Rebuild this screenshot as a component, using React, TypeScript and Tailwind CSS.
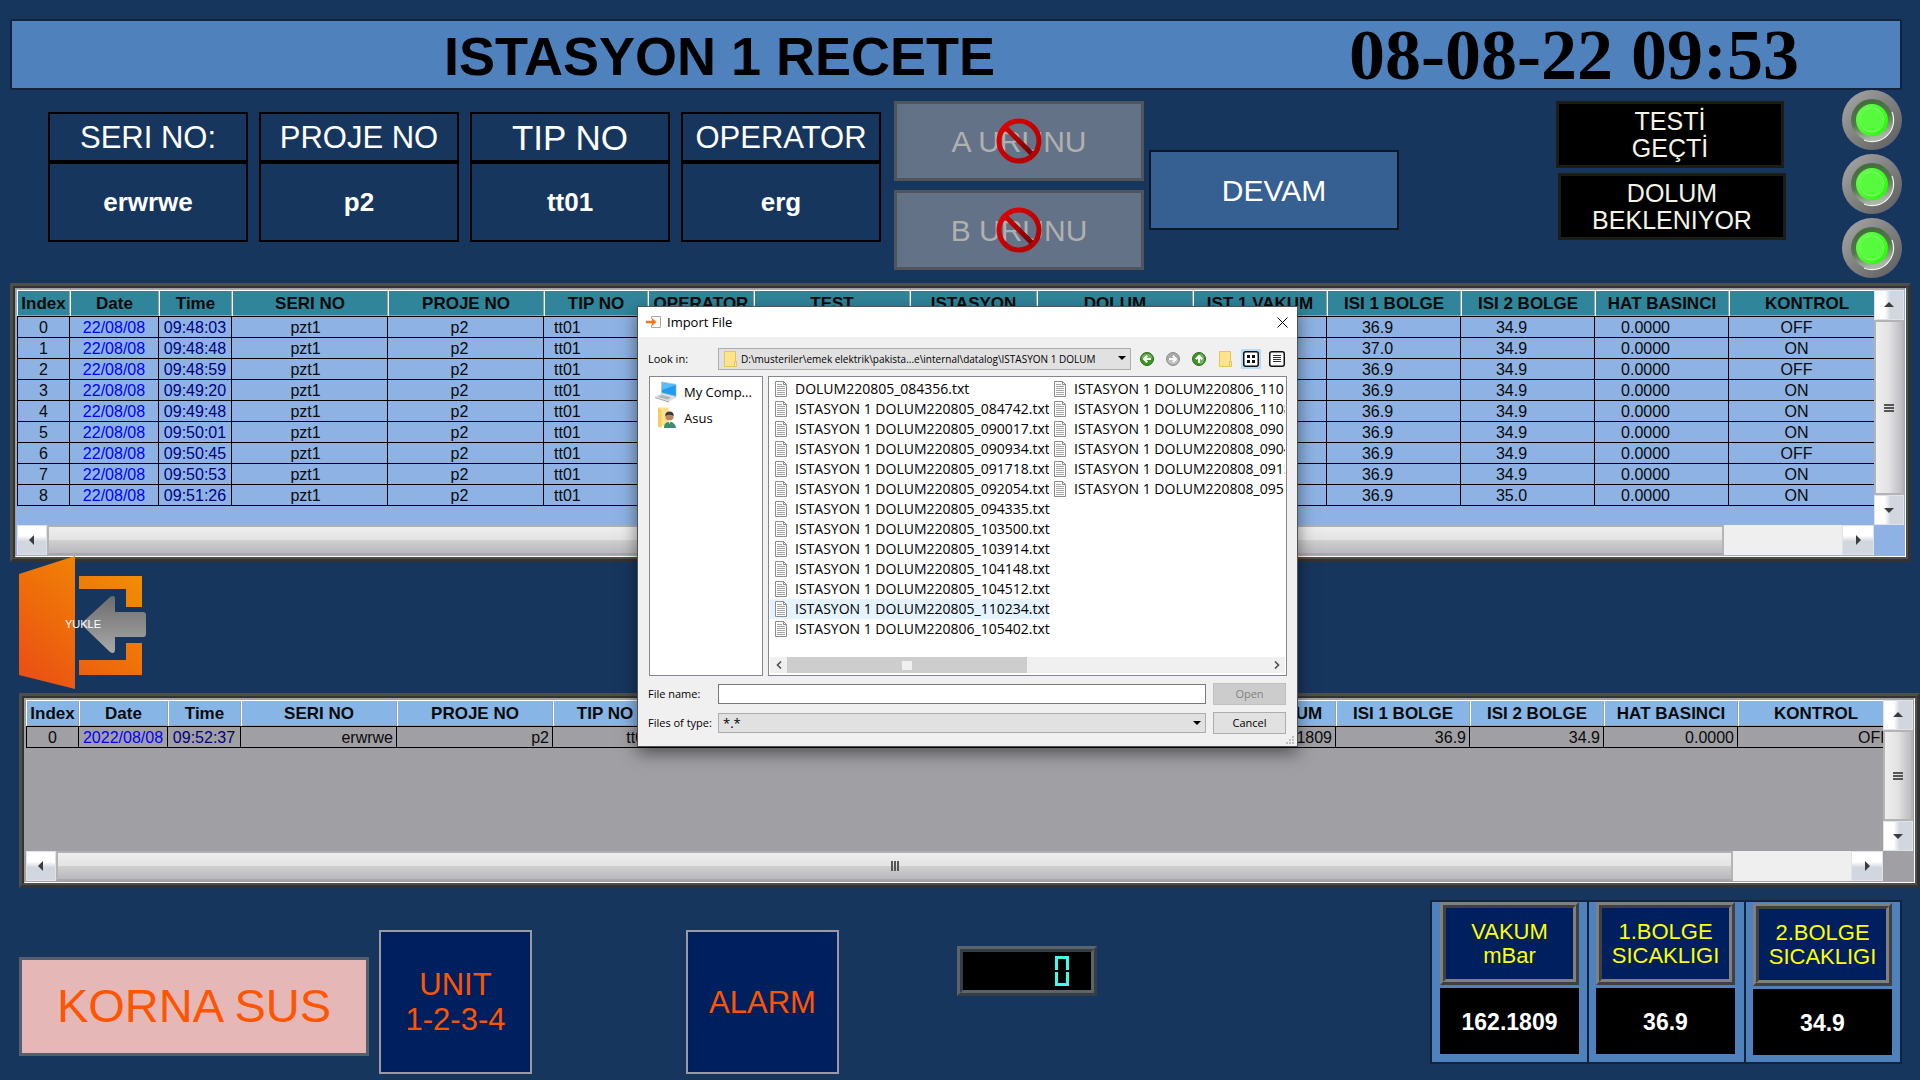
import React from "react";

/* ---------- data ---------- */

type Column = { title: string; width: string; cell: string };

const logColumns: Column[] = [
  { title: "Index", width: "w-[53px]", cell: "text-center" },
  { title: "Date", width: "w-[89px]", cell: "text-center text-[#0000ff]" },
  { title: "Time", width: "w-[73px]", cell: "text-center text-[#000080]" },
  { title: "SERI NO", width: "w-[156px]", cell: "text-center pr-2" },
  { title: "PROJE NO", width: "w-[156px]", cell: "text-center pr-3" },
  { title: "TIP NO", width: "w-[104px]", cell: "pl-2.5" },
  { title: "OPERATOR", width: "w-[106px]", cell: "text-center" },
  { title: "TEST", width: "w-[156px]", cell: "text-center" },
  { title: "ISTASYON", width: "w-[127px]", cell: "text-center" },
  { title: "DOLUM", width: "w-[156px]", cell: "text-center" },
  { title: "IST 1 VAKUM", width: "w-[134px]", cell: "text-center" },
  { title: "ISI 1 BOLGE", width: "w-[134px]", cell: "text-center pr-8" },
  { title: "ISI 2 BOLGE", width: "w-[134px]", cell: "text-center pr-8" },
  { title: "HAT BASINCI", width: "w-[134px]", cell: "text-center pr-8" },
  { title: "KONTROL", width: "w-auto", cell: "text-center pr-5" },
];

const liveColumns: Column[] = logColumns.map((c, i) => ({
  ...c,
  cell: i < 3 ? c.cell : "text-right pr-[3px]",
}));

const logRow = (i: number, time: string, isi1: string, isi2: string, kontrol: string) => [
  String(i), "22/08/08", time, "pzt1", "p2", "tt01", "", "", "", "", "", isi1, isi2, "0.0000", kontrol,
];

const logRows = [
  logRow(0, "09:48:03", "36.9", "34.9", "OFF"),
  logRow(1, "09:48:48", "37.0", "34.9", "ON"),
  logRow(2, "09:48:59", "36.9", "34.9", "OFF"),
  logRow(3, "09:49:20", "36.9", "34.9", "ON"),
  logRow(4, "09:49:48", "36.9", "34.9", "ON"),
  logRow(5, "09:50:01", "36.9", "34.9", "ON"),
  logRow(6, "09:50:45", "36.9", "34.9", "OFF"),
  logRow(7, "09:50:53", "36.9", "34.9", "ON"),
  logRow(8, "09:51:26", "36.9", "35.0", "ON"),
];

const liveRows = [
  ["0", "2022/08/08", "09:52:37", "erwrwe", "p2", "tt01", "erg", "", "", "", "162.1809", "36.9", "34.9", "0.0000", "OFF"],
];

const files = [
  "DOLUM220805_084356.txt",
  "ISTASYON 1 DOLUM220805_084742.txt",
  "ISTASYON 1 DOLUM220805_090017.txt",
  "ISTASYON 1 DOLUM220805_090934.txt",
  "ISTASYON 1 DOLUM220805_091718.txt",
  "ISTASYON 1 DOLUM220805_092054.txt",
  "ISTASYON 1 DOLUM220805_094335.txt",
  "ISTASYON 1 DOLUM220805_103500.txt",
  "ISTASYON 1 DOLUM220805_103914.txt",
  "ISTASYON 1 DOLUM220805_104148.txt",
  "ISTASYON 1 DOLUM220805_104512.txt",
  "ISTASYON 1 DOLUM220805_110234.txt",
  "ISTASYON 1 DOLUM220806_105402.txt",
  "ISTASYON 1 DOLUM220806_1101",
  "ISTASYON 1 DOLUM220806_1108",
  "ISTASYON 1 DOLUM220808_0901",
  "ISTASYON 1 DOLUM220808_0904",
  "ISTASYON 1 DOLUM220808_0915",
  "ISTASYON 1 DOLUM220808_0951",
];
const hoveredFile = 11;

/* ---------- header widgets ---------- */

function InfoBox({ label, value, big }: { label: string; value: string; big?: boolean }) {
  return (
    <div className="w-[200px] text-center text-white">
      <div
        className={`flex h-[50px] items-center justify-center whitespace-nowrap border-2 border-black pt-0.5 ${big ? "text-[35px]" : "text-[31px]"}`}
      >
        {label}
      </div>
      <div className="flex h-20 items-center justify-center border-2 border-black text-[26px] font-bold">{value}</div>
    </div>
  );
}

function Prohibited() {
  return (
    <svg viewBox="0 0 46 46" className="absolute left-1/2 top-1/2 size-[46px] -translate-x-1/2 -translate-y-1/2">
      <defs>
        <linearGradient id="ban" x1="0" y1="0" x2="1" y2="1">
          <stop offset="0" stopColor="#e60000" />
          <stop offset="0.5" stopColor="#c40000" />
          <stop offset="1" stopColor="#b00000" />
        </linearGradient>
        <linearGradient id="banBar" gradientUnits="userSpaceOnUse" x1="9" y1="9" x2="37" y2="37">
          <stop offset="0" stopColor="#d80000" />
          <stop offset="1" stopColor="#700000" />
        </linearGradient>
      </defs>
      <path d="M10 10L36 36" stroke="url(#banBar)" strokeWidth="5" />
      <circle cx="23" cy="23" r="20" fill="none" stroke="url(#ban)" strokeWidth="5" />
    </svg>
  );
}

function LockedButton({ children }: { children: React.ReactNode }) {
  return (
    <button
      type="button"
      disabled
      className="relative h-20 w-[250px] border-[3px] border-[#50555c] bg-[#637287] text-[30px] text-[#b0b0b0]"
    >
      {children}
      <Prohibited />
    </button>
  );
}

function Led() {
  return (
    <svg viewBox="0 0 60 60" className="size-[60px]" role="img" aria-label="on">
      <defs>
        <linearGradient id="bezel" x1="0" y1="0" x2="1" y2="1">
          <stop offset="0" stopColor="#aaaaaa" />
          <stop offset="0.5" stopColor="#808080" />
          <stop offset="1" stopColor="#5c5c5c" />
        </linearGradient>
        <linearGradient id="cavity" x1="0" y1="0" x2="0.3" y2="1">
          <stop offset="0" stopColor="#3f6a38" />
          <stop offset="0.6" stopColor="#55774f" />
          <stop offset="1" stopColor="#a9b8a6" />
        </linearGradient>
        <linearGradient id="lamp" x1="0" y1="0" x2="1" y2="0.8">
          <stop offset="0" stopColor="#6dff55" />
          <stop offset="0.6" stopColor="#46fb2a" />
          <stop offset="1" stopColor="#22ff00" />
        </linearGradient>
      </defs>
      <circle cx="30" cy="30" r="30" fill="url(#bezel)" />
      <circle cx="30" cy="30" r="21" fill="url(#cavity)" />
      <path d="M50 22A21.5 21.5 0 0 1 22 50" fill="none" stroke="#f2f7f0" strokeWidth="1.2" />
      <circle cx="30" cy="30" r="16" fill="url(#lamp)" />
      <circle cx="30" cy="30" r="12" fill="#55fb3c" stroke="#7dff68" strokeWidth="1" />
    </svg>
  );
}

function StatusBox({ lines }: { lines: string[] }) {
  return (
    <div className="flex h-[67px] w-[228px] flex-col items-center justify-center border-[3px] border-[#1d1d14] bg-black text-[25px] leading-[27px] text-[#f4f4e6]">
      {lines.map((l) => (
        <span key={l}>{l}</span>
      ))}
    </div>
  );
}

/* ---------- table panels ---------- */

function Arrow({ dir }: { dir: "left" | "right" | "up" | "down" }) {
  const d = {
    left: "M9 2V12L4 7Z",
    right: "M5 2V12L10 7Z",
    up: "M2 9H12L7 4Z",
    down: "M2 5H12L7 10Z",
  }[dir];
  return (
    <svg viewBox="0 0 14 14" className="size-3.5">
      <path d={d} fill="#3c3c3c" />
    </svg>
  );
}

function VScroll() {
  const btn =
    "flex h-[30px] w-full items-center justify-center border border-[#dfe3e8] bg-linear-to-r from-white from-35% to-[#d2d7df] to-55%";
  return (
    <div className="flex w-[30px] flex-col bg-[#eeeeee]">
      <button type="button" aria-label="Scroll up" className={btn}>
        <Arrow dir="up" />
      </button>
      <div className="flex flex-1 flex-col items-center justify-center gap-px border-2 border-[#b4b4b6] bg-linear-to-r from-[#eeeeee] via-[#e2e2e2] via-50% to-[#bcbcc0]">
        <i className="h-0.5 w-2.5 bg-[#555]" />
        <i className="h-0.5 w-2.5 bg-[#555]" />
        <i className="h-0.5 w-2.5 bg-[#555]" />
      </div>
      <button type="button" aria-label="Scroll down" className={btn}>
        <Arrow dir="down" />
      </button>
    </div>
  );
}

function HScroll() {
  const btn =
    "flex h-full items-center justify-center border border-[#dfe3e8] bg-linear-to-b from-white from-35% to-[#d2d7df] to-55%";
  return (
    <div className="flex h-[30px] min-w-0 flex-1 bg-[#efefef]">
      <button type="button" aria-label="Scroll left" className={`${btn} w-[30px]`}>
        <Arrow dir="left" />
      </button>
      <div className="flex flex-1 flex-col border-2 border-b-[#a8a8aa] border-l-[#b4b4b6] border-r-[#b4b4b6] border-t-[#b0b0b2]">
        <div className="relative flex-1 bg-linear-to-b from-[#eeeeee] to-[#e3e3e3]">
          <span className="absolute left-1/2 top-2 flex -translate-x-1/2 gap-px">
            <i className="h-2.5 w-0.5 bg-[#555]" />
            <i className="h-2.5 w-0.5 bg-[#555]" />
            <i className="h-2.5 w-0.5 bg-[#555]" />
          </span>
        </div>
        <div className="flex-1 bg-linear-to-b from-[#d0d0d0] to-[#b9b9be]" />
      </div>
      <div className="w-[118px]" />
      <button type="button" aria-label="Scroll right" className={`${btn} w-8`}>
        <Arrow dir="right" />
      </button>
    </div>
  );
}

type GridProps = {
  columns: Column[];
  rows: string[][];
  bg: string;
  head: string;
  area: string;
};

function DataPanel({ columns, rows, bg, head, area }: GridProps) {
  return (
    <div className="border-[3px] border-b-[#333333] border-l-[#4e4e4c] border-r-[#333333] border-t-[#4e4e4c]">
      <div className="border-2 border-b-[#4e4e4c] border-l-[#333333] border-r-[#4e4e4c] border-t-[#333333]">
        <div className={`border border-b-white border-l-[#a0a0a0] border-r-white border-t-[#a0a0a0] p-px ${bg}`}>
          <div className="flex">
            <div className={`min-w-0 flex-1 overflow-hidden ${area}`}>
              <table className="w-[calc(100%+11px)] table-fixed border-separate border-spacing-0 text-[16px] leading-[18px] text-[#0a0a0a]">
                <colgroup>
                  {columns.map((c) => (
                    <col key={c.title} className={c.width} />
                  ))}
                </colgroup>
                <thead>
                  <tr>
                    {columns.map((c) => (
                      <th
                        key={c.title}
                        className={`h-[27px] whitespace-nowrap border-b border-black px-0 pb-0 pt-0.5 text-center text-[17px] font-bold shadow-[inset_1px_1px_0_#ffffff,inset_-1px_-1px_0_#a0a0a0] ${head}`}
                      >
                        {c.title}
                      </th>
                    ))}
                  </tr>
                </thead>
                <tbody>
                  {rows.map((r) => (
                    <tr key={r[0]}>
                      {r.map((v, i) => (
                        <td
                          key={i}
                          className={`h-[21px] whitespace-nowrap border-b border-r border-black pb-0 pt-0.5 first:border-l ${columns[i].cell}`}
                        >
                          {v}
                        </td>
                      ))}
                    </tr>
                  ))}
                </tbody>
              </table>
            </div>
            <VScroll />
          </div>
          <div className="flex">
            <HScroll />
            <div className="w-[30px]" />
          </div>
        </div>
      </div>
    </div>
  );
}

function LoadButton() {
  return (
    <button type="button" className="relative -mt-1.5 block h-[134px] w-[127px]">
      <svg viewBox="0 0 127 134" className="size-full">
        <defs>
          <linearGradient id="door" gradientUnits="userSpaceOnUse" x1="10" y1="125" x2="110" y2="15">
            <stop offset="0" stopColor="#ea5014" />
            <stop offset="0.45" stopColor="#ee6c0a" />
            <stop offset="1" stopColor="#f18c04" />
          </linearGradient>
          <linearGradient id="arrow" x1="0" y1="0" x2="0" y2="1">
            <stop offset="0" stopColor="#6c6c6c" />
            <stop offset="1" stopColor="#a9a9a9" />
          </linearGradient>
        </defs>
        <g fill="url(#door)">
          <path d="M0 18L56 0V133L0 119Z" />
          <path d="M60 20H123V51H107V33H60Z" />
          <path d="M60 119H123V87H107V104H60Z" />
        </g>
        <path
          fill="url(#arrow)"
          d="M65 65L91 41Q96 38 96 43V56H124Q127 56 127 59V78Q127 81 124 81H96V93Q96 99 91 96L65 71Q62 68 65 65Z"
        />
      </svg>
      <span className="absolute left-[46px] top-[60px] text-[11px] leading-4 text-white">YUKLE</span>
    </button>
  );
}

/* ---------- import dialog ---------- */

function FileIcon() {
  return (
    <svg viewBox="0 0 12 16" className="h-4 w-3 shrink-0">
      <path d="M.5.5H8.5L11.5 3.5V15.5H.5Z" fill="#fcfcfc" stroke="#8b8b8b" />
      <path d="M8.5.5V3.5H11.5" fill="none" stroke="#8b8b8b" />
      <path d="M2 3.5H7M2 5.5H10M2 7.5H10M2 9.5H10M2 11.5H10M2 13.5H10" stroke="#a6a6a6" />
    </svg>
  );
}

function FolderIcon() {
  return (
    <svg viewBox="0 0 13 16" className="h-4 w-[13px]">
      <path d="M.5.5H11.5V10.5H12.5V15.5H.5Z" fill="#ffe48c" stroke="#e8c558" />
      <path d="M10.5 10.5H12.5V15.5H10.5Z" fill="#ffe9a4" stroke="#e8c558" />
    </svg>
  );
}

function NavIcon({ turn, tone }: { turn: string; tone: "green" | "gray" }) {
  const green = tone === "green";
  return (
    <svg viewBox="0 0 14 14" className={`size-3.5 ${turn}`}>
      <circle cx="7" cy="7" r="6.5" fill={green ? "#3f9427" : "#a9a9a9"} stroke={green ? "#2b6d1a" : "#8f8f8f"} />
      <path d="M1.5 6A5.6 5 0 0 1 12.5 6Q7 8 1.5 6Z" fill="#ffffff" opacity="0.28" />
      <path d="M11 7H4.5M7.2 3.8L4 7L7.2 10.2" fill="none" stroke="#ffffff" strokeWidth="2" />
    </svg>
  );
}

function ComputerIcon() {
  return (
    <svg viewBox="0 0 22 22" className="size-[22px]">
      <path d="M6 .5L21.5 3V16.5L6 12.5Z" fill="#b9c6cf" />
      <path d="M7 1.8L20.8 4V15L7 11.6Z" fill="#1e9cf0" />
      <path d="M7 1.8L20.8 4L7 9Z" fill="#58bdf8" />
      <path d="M6 12.5L21.5 16.5L14 20.5L0 16Z" fill="#d9dfe3" />
      <path d="M3 15.8L7 14L16 16.5L12.5 18.6Z" fill="#aab3b9" />
      <path d="M0 16L14 20.5V21.5L0 17Z" fill="#98a3ab" />
    </svg>
  );
}

function UserFolderIcon() {
  return (
    <svg viewBox="0 0 20 22" className="h-[22px] w-5">
      <path d="M1 .5H11.5V18L1 19.5Z" fill="#ffe089" />
      <path d="M1 .5L4.5 3V21L1 19.5Z" fill="#f5cb62" />
      <path d="M7 21Q6.5 15.5 12.5 14.5Q18.5 15.5 19 21Z" fill="#3c8f6d" />
      <circle cx="12.5" cy="9.5" r="4" fill="#b98562" />
      <path d="M8.3 9Q8 4.5 12.5 4.5Q17 4.5 16.7 9Q12.5 6.5 8.3 9Z" fill="#3b3a38" />
      <path d="M11 13.5H14L12.5 17Z" fill="#e6efe9" />
    </svg>
  );
}

function Caret() {
  return (
    <svg viewBox="0 0 8 4" className="pointer-events-none absolute right-[5px] top-2 h-1 w-2">
      <path d="M0 0H8L4 4Z" fill="#000000" />
    </svg>
  );
}

function ImportDialog() {
  const actionBtn = "h-[22px] w-[73px] border text-center";
  return (
    <section
      role="dialog"
      aria-label="Import File"
      className="absolute left-[637px] top-[306px] w-[661px] border border-[#4d5357] bg-[#f0f0f0] font-['Open_Sans',sans-serif] text-[11px] leading-4 text-black shadow-[0_6px_16px_rgba(0,0,0,0.5)]"
    >
      <header className="flex h-[30px] items-center bg-white pl-2 pr-[9px]">
        <svg viewBox="0 0 15 12" className="h-3 w-[15px]">
          <path d="M5.5 3V.5H14.5V11.5H5.5V9" fill="#fafafa" stroke="#a9a9a9" />
          <path d="M0 4.8H6V2L10.5 6L6 10V7.2H0Z" fill="#f07818" />
        </svg>
        <h2 className="ml-1.5 text-[13px]">Import File</h2>
        <button type="button" aria-label="Close" className="ml-auto">
          <svg viewBox="0 0 11 11" className="size-[11px]">
            <path d="M.5.5L10.5 10.5M10.5.5L.5 10.5" stroke="#000000" />
          </svg>
        </button>
      </header>

      <div className="flex h-[39px] items-center pl-2.5 pr-3 pt-1">
        <label htmlFor="lookin" className="w-[70px]">
          Look in:
        </label>
        <div className="relative w-[413px]">
          <select
            id="lookin"
            className="block h-[22px] w-full appearance-none border border-[#adadad] bg-[#e1e1e1] pl-[22px] pr-5 text-[10px]"
          >
            <option>D:\musteriler\emek elektrik\pakista...e\internal\datalog\ISTASYON 1 DOLUM</option>
          </select>
          <span className="pointer-events-none absolute left-1.5 top-[3px]">
            <FolderIcon />
          </span>
          <Caret />
        </div>
        <div className="ml-[9px] flex items-center gap-3">
          <button type="button" aria-label="Back">
            <NavIcon turn="rotate-0" tone="green" />
          </button>
          <button type="button" aria-label="Forward">
            <NavIcon turn="rotate-180" tone="gray" />
          </button>
          <button type="button" aria-label="Parent folder">
            <NavIcon turn="rotate-90" tone="green" />
          </button>
          <button type="button" aria-label="New folder" className="ml-px">
            <FolderIcon />
          </button>
        </div>
        <button type="button" aria-label="List view" className="ml-[9px] flex size-5 items-center justify-center bg-[#b8dcf8]">
          <svg viewBox="0 0 16 16" className="size-4">
            <rect x="0.75" y="0.75" width="14.5" height="14.5" rx="2" fill="#ffffff" stroke="#111111" strokeWidth="1.5" />
            <path d="M4 4H7V7H4ZM9 4H12V7H9ZM4 9H7V12H4ZM9 9H12V12H9Z" fill="#111111" />
          </svg>
        </button>
        <button type="button" aria-label="Detail view" className="ml-2">
          <svg viewBox="0 0 16 16" className="size-4">
            <rect x="0.75" y="0.75" width="14.5" height="14.5" rx="2" fill="#ffffff" stroke="#111111" strokeWidth="1.5" />
            <path d="M4 4.5H12M4 6.5H12M4 8.5H12M4 10.5H12" stroke="#333333" />
          </svg>
        </button>
      </div>

      <div className="flex h-[300px] gap-[5px] pl-[11px] pr-2.5">
        <ul className="w-[114px] border border-[#828790] bg-white pt-0.5 text-[13px]">
          <li className="flex h-[26px] items-center">
            <span className="flex w-[34px] pl-[5px]">
              <ComputerIcon />
            </span>
            My Comp...
          </li>
          <li className="flex h-[26px] items-center">
            <span className="flex w-[34px] pl-[7px]">
              <UserFolderIcon />
            </span>
            Asus
          </li>
        </ul>
        <div className="flex min-w-0 flex-1 flex-col justify-between overflow-hidden border border-[#828790] bg-white px-px pb-px pt-0.5 text-[14px]">
          <ul className="grid grid-flow-col auto-cols-[279px] grid-rows-[repeat(13,20px)] overflow-hidden">
            {files.map((f, i) => (
              <li key={f} className={i === hoveredFile ? "bg-[#e5f3ff]" : "bg-white"}>
                <button type="button" className="flex h-5 w-full items-center gap-2 whitespace-nowrap pl-[5px]">
                  <FileIcon />
                  {f}
                </button>
              </li>
            ))}
          </ul>
          <div className="mb-px flex h-4 items-center bg-[#f0f0f0]">
            <button type="button" aria-label="Scroll left" className="flex w-[17px] justify-center">
              <svg viewBox="0 0 6 8" className="h-2 w-1.5">
                <path d="M5 .5L1.5 4L5 7.5" fill="none" stroke="#505050" strokeWidth="1.6" />
              </svg>
            </button>
            <div className="flex h-full w-60 items-center bg-[#cdcdcd] pl-[115px]">
              <i className="h-[9px] w-2.5 bg-[#f0f0f0]" />
            </div>
            <button type="button" aria-label="Scroll right" className="ml-auto flex w-[17px] justify-center">
              <svg viewBox="0 0 6 8" className="h-2 w-1.5">
                <path d="M1 .5L4.5 4L1 7.5" fill="none" stroke="#505050" strokeWidth="1.6" />
              </svg>
            </button>
          </div>
        </div>
      </div>

      <div className="grid grid-cols-[70px_1fr_73px] items-center gap-y-[7px] pb-3 pl-2.5 pr-[11px] pt-[7px]">
        <label htmlFor="fname">File name:</label>
        <input id="fname" type="text" className="mr-[7px] h-5 border border-[#7a7a7a] bg-white px-1 outline-none" />
        <button type="button" disabled className={`${actionBtn} border-[#bfbfbf] bg-[#cccccc] text-[#838383]`}>
          Open
        </button>
        <label htmlFor="ftype" className="whitespace-nowrap">
          Files of type:
        </label>
        <div className="relative mr-[7px]">
          <select id="ftype" className="block h-5 w-full appearance-none border border-[#adadad] bg-[#e1e1e1] pl-1 text-[13px]">
            <option>*.*</option>
          </select>
          <Caret />
        </div>
        <button type="button" className={`${actionBtn} border-[#adadad] bg-[#e1e1e1]`}>
          Cancel
        </button>
      </div>
      <svg viewBox="0 0 8 8" className="absolute bottom-0.5 right-[3px] size-2">
        <path d="M6 0H8V2H6ZM3 3H5V5H3ZM6 3H8V5H6ZM0 6H2V8H0ZM3 6H5V8H3ZM6 6H8V8H6Z" fill="#bfbfbf" />
      </svg>
    </section>
  );
}

/* ---------- bottom row ---------- */

function SevenSegmentZero() {
  return (
    <span className="flex h-[30px] w-3.5 flex-col justify-between">
      <span className="sr-only">0</span>
      <i className="h-3.5 border-x-[3px] border-t-[3px] border-[#3ffbe8]" />
      <i className="h-3.5 border-x-[3px] border-b-[3px] border-[#3ffbe8]" />
    </span>
  );
}

function Sensor({ lines, value, className }: { lines: string[]; value: string; className: string }) {
  return (
    <div className={`h-[164px] w-[157px] border-y-2 border-l-2 border-[#13233b] bg-[#4f81bd] last:w-[158px] last:border-r-2 ${className}`}>
      <div className="w-[139px] border-[3px] border-b-[#404040] border-l-[#808080] border-r-[#404040] border-t-[#808080]">
        <div className="flex h-[77px] flex-col items-center justify-center border-[3px] border-b-[#808080] border-l-[#404040] border-r-[#808080] border-t-[#404040] bg-[#001f5f] text-[22px] leading-6 text-[#ffff00]">
          {lines.map((l) => (
            <span key={l}>{l}</span>
          ))}
        </div>
      </div>
      <div className="mt-[3px] flex h-[66px] w-[139px] items-center justify-center bg-black pt-0.5 text-[23px] font-bold text-white">
        {value}
      </div>
    </div>
  );
}

const navBtn =
  "h-36 w-[153px] border-2 border-[#9a9aa6] bg-[#001f5f] text-[31px] leading-[35px] text-[#ff5500]";

export default function App() {
  return (
    <main className="relative min-h-screen overflow-hidden bg-[#17365d] font-['Liberation_Sans',Arial,sans-serif]">
      <div className="pl-2.5 pr-[18px] pt-[19px]">
        <header className="flex h-[71px] items-center justify-between rounded-xs border-2 border-[#13233b] bg-[#4f81bd] pl-[432px] pr-[101px] text-black">
          <h1 className="pt-0.5 text-[54px] font-bold leading-none">ISTASYON 1 RECETE</h1>
          <time className="font-['Liberation_Serif','Times_New_Roman',serif] text-[72px] font-bold leading-[66px]">
            08-08-22 09:53
          </time>
        </header>
      </div>

      <div className="flex h-[193px] items-start pl-12 pr-[18px]">
        <div className="mt-[22px] flex gap-[11px]">
          <InfoBox label="SERI NO:" value="erwrwe" />
          <InfoBox label="PROJE NO" value="p2" />
          <InfoBox label="TIP NO" value="tt01" big />
          <InfoBox label="OPERATOR" value="erg" />
        </div>
        <div className="ml-[13px] mt-[11px] flex flex-col gap-[9px]">
          <LockedButton>A URUNU</LockedButton>
          <LockedButton>B URUNU</LockedButton>
        </div>
        <button
          type="button"
          className="ml-[5px] mt-[60px] h-20 w-[250px] border-2 border-[#0c1828] bg-[#376092] text-[30px] text-white"
        >
          DEVAM
        </button>
        <div className="ml-auto mt-[11px] flex flex-col gap-[5px]">
          <StatusBox lines={["TESTİ", "GEÇTİ"]} />
          <div className="pl-0.5">
            <StatusBox lines={["DOLUM", "BEKLENIYOR"]} />
          </div>
        </div>
        <div className="ml-14 flex flex-col gap-1">
          <Led />
          <Led />
          <Led />
        </div>
      </div>

      <div className="pl-2.5 pr-[9px]">
        <DataPanel columns={logColumns} rows={logRows} bg="bg-[#8db2e3]" head="bg-[#31859b]" area="h-[235px]" />
      </div>

      <div className="flex h-[131px] items-start pl-[19px]">
        <LoadButton />
      </div>

      <div className="pl-[19px]">
        <DataPanel columns={liveColumns} rows={liveRows} bg="bg-[#a09fa4]" head="bg-[#86b5e6]" area="h-[151px]" />
      </div>

      <div className="flex items-start pl-[19px] pr-[18px] pt-3">
        <button
          type="button"
          className="mt-[57px] h-[99px] w-[350px] border-[3px] border-[#55606c] bg-[#e5b8b7] text-[47px] text-[#ff5500]"
        >
          KORNA SUS
        </button>
        <button type="button" className={`${navBtn} ml-2.5 mt-[30px]`}>
          UNIT
          <br />
          1-2-3-4
        </button>
        <button type="button" className={`${navBtn} ml-[154px] mt-[30px]`}>
          ALARM
        </button>
        <div className="ml-[118px] mt-[46px] w-[140px] border-[3px] border-b-[#353d45] border-l-[#5d636b] border-r-[#353d45] border-t-[#5d636b]">
          <div className="flex h-11 items-center justify-end border-[3px] border-b-[#5d636b] border-l-[#353d45] border-r-[#5d636b] border-t-[#353d45] bg-black pr-[22px]">
            <SevenSegmentZero />
          </div>
        </div>
        <div className="ml-auto flex">
          <Sensor lines={["VAKUM", "mBar"]} value="162.1809" className="pl-2" />
          <Sensor lines={["1.BOLGE", "SICAKLIGI"]} value="36.9" className="pl-[7px]" />
          <Sensor lines={["2.BOLGE", "SICAKLIGI"]} value="34.9" className="pl-[7px] pt-px" />
        </div>
      </div>

      <ImportDialog />
    </main>
  );
}
